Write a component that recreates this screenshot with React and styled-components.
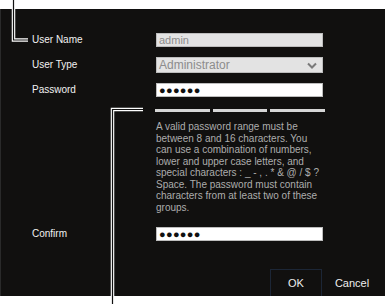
import React from "react";
import styled, { createGlobalStyle } from "styled-components";

const GlobalStyle = createGlobalStyle`
  html, body {
    margin: 0;
    padding: 0;
    background: #ffffff;
  }
  body {
    font-family: "Liberation Sans", Arial, sans-serif;
  }
`;

const Page = styled.div`
  position: relative;
  width: 387px;
  height: 304px;
  padding-top: 9px;
  box-sizing: border-box;
  overflow: hidden;
`;

const Panel = styled.div`
  width: 385px;
  height: 287px;
  background-color: #11100f;
  border-left: 1px solid #2a2a2a;
  box-sizing: border-box;
  padding: 24px 0 0 31px;
  display: flex;
  flex-direction: column;
`;

const Row = styled.div`
  display: grid;
  grid-template-columns: 124px 167px;
  align-items: center;
  margin-top: ${(p) => p.$gap || 0}px;
`;

const Label = styled.div`
  color: #f2f2f2;
  font-size: 10px;
  line-height: 12px;
`;

const Field = styled.div`
  height: ${(p) => p.$h || 14}px;
  background-color: ${(p) => (p.$light ? "#ffffff" : "#e3e3e3")};
  border: 1px solid #bdbdbd;
  box-sizing: border-box;
  display: flex;
  align-items: center;
  justify-content: space-between;
  padding: 0 5px 0 2px;
  color: ${(p) => (p.$dots ? "#111111" : "#8c8c8c")};
  font-size: ${(p) => p.$size || 11}px;
  letter-spacing: ${(p) => (p.$dots ? "0.3px" : "0")};
`;

const Bars = styled.div`
  display: grid;
  grid-template-columns: 55px 54px 55px;
  column-gap: 3px;
  margin: 12px 0 0 123px;
  width: 170px;
`;

const Bar = styled.div`
  height: 3px;
  background-color: #d6d6d6;
`;

const Hint = styled.p`
  margin: 9px 0 0 124px;
  color: #adadad;
  font-size: 10px;
  line-height: 11.5px;
  white-space: nowrap;
`;

const Actions = styled.div`
  display: flex;
  justify-content: flex-end;
  align-items: stretch;
  margin-top: auto;
  padding-right: 7px;
  height: 27px;
`;

const Button = styled.div`
  width: ${(p) => p.$w}px;
  box-sizing: border-box;
  display: flex;
  align-items: center;
  justify-content: center;
  color: #eeeeee;
  font-size: 11px;
  border: 1px solid ${(p) => (p.$focus ? "#1c2636" : "transparent")};
  border-bottom: none;
  margin-left: ${(p) => p.$ml || 0}px;
`;

const Callout = styled.svg`
  position: absolute;
  left: 0;
  top: 0;
  pointer-events: none;
`;

const Chevron = () => (
  <svg width="10" height="7" viewBox="0 0 10 7">
    <path d="M1 1.5 L5 5.5 L9 1.5" fill="none" stroke="#7a7a7a" strokeWidth="2" />
  </svg>
);

const hintLines = [
  "A valid password range must be",
  "between 8 and 16 characters. You",
  "can use a combination of numbers,",
  "lower and upper case letters, and",
  "special characters : _ - , . * & @ / $ ?",
  "Space. The password must contain",
  "characters from at least two of these",
  "groups.",
];

export default function App() {
  return (
    <>
      <GlobalStyle />
      <Page>
        <Panel>
          <Row>
            <Label>User Name</Label>
            <Field>admin</Field>
          </Row>
          <Row $gap={10}>
            <Label>User Type</Label>
            <Field $h={16} $size={12}>
              Administrator
              <Chevron />
            </Field>
          </Row>
          <Row $gap={10}>
            <Label>Password</Label>
            <Field $light $dots>●●●●●●</Field>
          </Row>
          <Bars>
            <Bar />
            <Bar />
            <Bar />
          </Bars>
          <Hint>
            {hintLines.map((l, i) => (
              <React.Fragment key={i}>
                {l}
                <br />
              </React.Fragment>
            ))}
          </Hint>
          <Row $gap={14}>
            <Label>Confirm</Label>
            <Field $light $dots>●●●●●●</Field>
          </Row>
          <Actions>
            <Button $w={52} $focus>OK</Button>
            <Button $w={52} $ml={4}>Cancel</Button>
          </Actions>
        </Panel>
        <Callout width="387" height="304">
          <polyline points="13.5,9 13.5,40 28,40" fill="none" stroke="#ffffff" strokeWidth="3.5" />
          <polyline points="13.5,0 13.5,40 28,40" fill="none" stroke="#111111" strokeWidth="1.2" />
          <polyline points="112.5,296 112.5,109.5 143,109.5" fill="none" stroke="#ffffff" strokeWidth="3.5" />
          <polyline points="112.5,304 112.5,109.5 143,109.5" fill="none" stroke="#111111" strokeWidth="1.2" />
        </Callout>
      </Page>
    </>
  );
}
